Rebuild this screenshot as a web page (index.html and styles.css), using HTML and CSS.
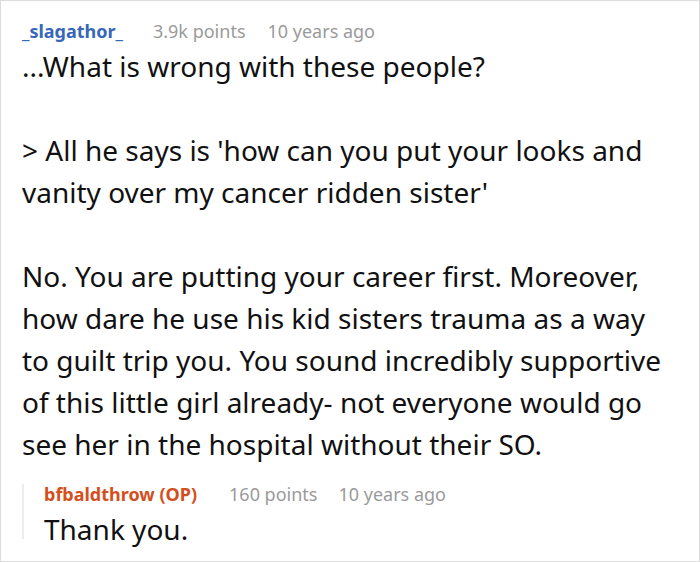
FILE: index.html
```html
<!DOCTYPE html>
<html>
<head>
<meta charset="utf-8">
<link rel="stylesheet" href="styles.css">
</head>
<body>
<div class="card">
  <div class="comment">
    <div class="meta">
      <span class="author">_slagathor_</span>
      <span class="points">3.9k points</span>
      <span class="time">10 years ago</span>
    </div>
    <div class="body">
      <p>...What is wrong with these people?</p>
      <p>&gt; All he says is 'how can you put your looks and vanity over my cancer ridden sister'</p>
      <p>No. You are putting your career first. Moreover, how dare he use his kid sisters trauma as a way to guilt trip you. You sound incredibly supportive of this little girl already- not everyone would go see her in the hospital without their SO.</p>
    </div>
    <div class="reply">
      <div class="meta">
        <span class="author op">bfbaldthrow (OP)</span>
        <span class="points">160 points</span>
        <span class="time">10 years ago</span>
      </div>
      <div class="body">
        <p>Thank you.</p>
      </div>
    </div>
  </div>
</div>
</body>
</html>
```
FILE: styles.css
```css
html, body {
  margin: 0;
  padding: 0;
  background: #fff;
}
body {
  font-family: "Noto Sans", sans-serif;
  color: #111;
}
.card {
  width: 700px;
  height: 562px;
  box-sizing: border-box;
  border: 1px solid #dcdcdc;
  padding: 18px 30px 0 21px;
  overflow: hidden;
}
.meta {
  display: flex;
  font-size: 18px;
  line-height: 24px;
  color: #9a9a9a;
}
.author {
  color: #3767b8;
  font-weight: 700;
  margin-right: 30px;
}
.points {
  margin-right: 22px;
}
.author.op {
  color: #d3501c;
  margin-right: 32px;
}
.reply .points {
  margin-right: 21px;
}
.body {
  font-size: 28px;
  line-height: 42px;
}
.body p {
  margin: 0 0 42px 0;
}
.body p:last-child {
  margin-bottom: 0;
}
.comment > .body {
  margin-top: 2px;
}
.reply {
  margin-top: 26px;
  height: 55px;
  padding-left: 20px;
  border-left: 2px solid #ececec;
}
.reply .meta {
  margin-top: -7px;
  line-height: 20px;
}
.reply .body {
  margin-top: 4px;
}
```
